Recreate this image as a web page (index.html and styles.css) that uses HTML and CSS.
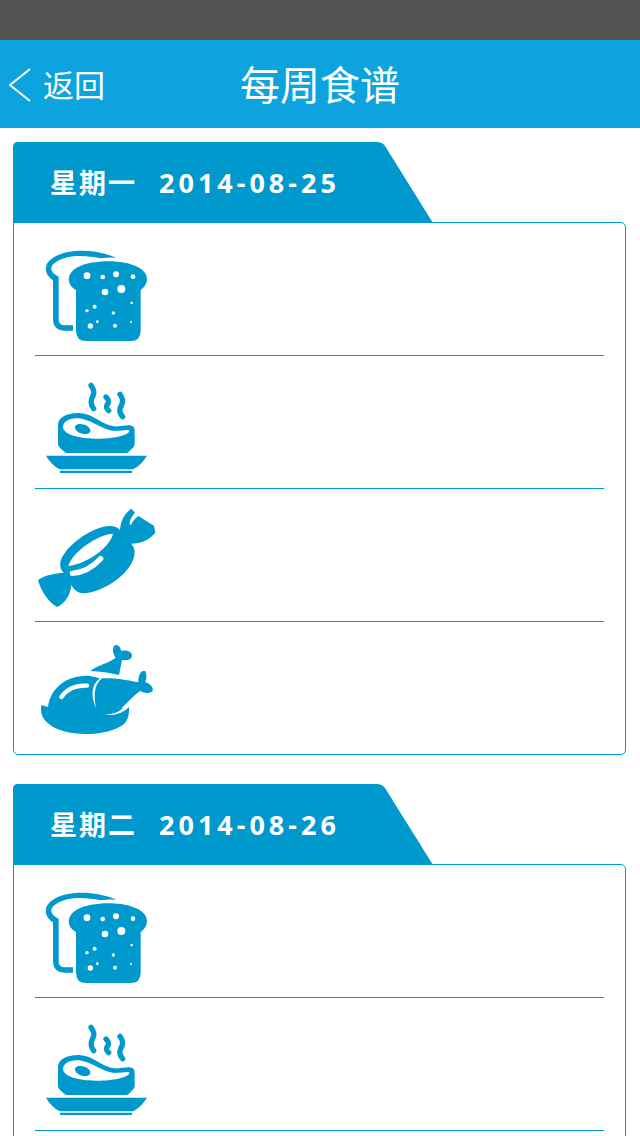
FILE: index.html
```html
<!DOCTYPE html>
<html lang="zh-CN">
<head>
<meta charset="utf-8">
<meta name="viewport" content="width=device-width, initial-scale=1">
<title>每周食谱</title>
<link rel="stylesheet" href="styles.css">
</head>
<body>
<svg class="symbols" aria-hidden="true">
  <symbol id="bread" viewBox="15 -51 375 396">
    <path class="solid" d="M259 53C190 24 108 27 68 54C39 73 42 103 69 121V238Q70 271 102 272H129V256H102Q86 255 86 238V110C59 97 57 79 78 66C112 43 170 46 211 55Q236 51 259 53Z"/>
    <path class="solid" d="M138 150C109 134 109 101 140 83C185 58 280 57 325 82C359 101 358 132 332 150V272Q332 303 301 303H169Q138 303 138 272Z"/>
    <g class="hole">
      <circle cx="171" cy="107" r="10"/><circle cx="218" cy="111" r="7"/><circle cx="258" cy="103" r="9"/><circle cx="309" cy="110" r="7"/>
      <circle cx="274" cy="147" r="12"/><circle cx="225" cy="156" r="10"/><circle cx="305" cy="189" r="4"/><circle cx="194" cy="200" r="6"/>
      <circle cx="171" cy="212" r="5"/><circle cx="250" cy="219" r="5"/><circle cx="181" cy="258" r="8"/><circle cx="202" cy="245" r="4"/>
      <circle cx="255" cy="257" r="6"/><circle cx="303" cy="246" r="3"/>
    </g>
  </symbol>
  <symbol id="steak" viewBox="15 -57 375 396">
    <path class="line round" stroke-width="16" d="M183 31C198 52 190 59 185 72C181 84 184 92 191 101M228 66C240 78 236 83 231 90C227 97 230 101 236 107M270 58C284 78 276 86 271 98C267 109 270 116 278 125"/>
    <path class="solid" d="M84 150C84 124 116 114 148 114C190 116 213 148 252 154C278 156 313 140 314 166V205Q315 213 307 220L296 231Q293 234 289 234H111Q107 234 104 231L90 219Q84 213 84 207Z"/>
    <path class="hole" d="M99 156C100 137 120 130 146 130C180 132 208 160 247 167C269 170 298 160 298 168C295 183 242 191 205 191C144 192 99 177 99 156Z"/>
    <ellipse class="solid" cx="158" cy="162" rx="24" ry="14" transform="rotate(18 158 162)"/>
    <path class="solid" d="M48 242H351C342 257 328 273 310 283H90C71 274 56 256 48 242ZM90 287H306V294H90Z"/>
  </symbol>
  <symbol id="candy" viewBox="15 -33 375 396">
    <path class="solid" d="M101 219C83 199 91 176 105 158C136 117 195 80 238 78Q258 77 270 90C272 67 279 43 304 26L315 38C306 49 298 61 299 75L304 73C308 63 316 55 325 48L372 77L376 98C359 120 330 131 304 131Q314 143 314 158C311 218 219 277 161 280Q138 281 124 255C122 282 105 312 81 321C57 307 35 279 24 240C47 225 76 219 101 219Z"/>
    <path class="hole" d="M115 198C126 157 203 102 249 101C239 143 171 191 115 198Z"/>
    <path class="gap round" stroke-width="16" d="M127 220C161 218 188 202 212 176"/>
  </symbol>
  <symbol id="chicken" viewBox="15 -39 375 396">
    <path class="solid" d="M180 108C209 87 239 84 257 68C248 56 246 37 255 30C266 28 273 39 273 48C288 44 306 50 306 62C305 73 292 77 276 75L267 120C238 113 213 109 180 108Z"/>
    <path class="solid" d="M34 210L54 216C61 162 108 118 181 123L214 130C242 128 282 132 325 142C325 119 333 103 346 109C351 119 350 131 346 141C363 148 371 157 368 168C357 178 342 174 330 168C309 183 293 203 273 221L297 214C298 238 295 254 282 267C237 305 101 310 54 265C35 249 31 231 34 210Z"/>
    <path class="hole" d="M180 121C195 125 202 127 209 131C185 146 181 181 198 219C190 178 193 148 216 130L234 120Z"/>
    <path class="hole" d="M226 237C254 239 276 226 297 203V216C278 234 252 245 226 237Z"/>
    <path class="gap round" stroke-width="13" d="M94 186C111 162 136 150 171 152"/>
  </symbol>
</svg>

<div class="status-bar"></div>
<header class="nav">
  <a class="back" href="#">
    <svg class="chevron" viewBox="0 0 22 34" aria-hidden="true"><path d="M21 1L1 17L21 33"/></svg>
    <span>返回</span>
  </a>
  <h1 class="title">每周食谱</h1>
</header>

<main class="menu">
  <section class="day">
    <h2 class="tab"><span>星期一</span><time datetime="2014-08-25">2014-08-25</time></h2>
    <ul class="meals">
      <li class="meal"><svg class="icon" role="img" aria-label="早餐"><use href="#bread"/></svg></li>
      <li class="meal"><svg class="icon" role="img" aria-label="午餐"><use href="#steak"/></svg></li>
      <li class="meal"><svg class="icon" role="img" aria-label="点心"><use href="#candy"/></svg></li>
      <li class="meal"><svg class="icon" role="img" aria-label="晚餐"><use href="#chicken"/></svg></li>
    </ul>
  </section>
  <section class="day">
    <h2 class="tab"><span>星期二</span><time datetime="2014-08-26">2014-08-26</time></h2>
    <ul class="meals">
      <li class="meal"><svg class="icon" role="img" aria-label="早餐"><use href="#bread"/></svg></li>
      <li class="meal"><svg class="icon" role="img" aria-label="午餐"><use href="#steak"/></svg></li>
      <li class="meal"><svg class="icon" role="img" aria-label="点心"><use href="#candy"/></svg></li>
      <li class="meal"><svg class="icon" role="img" aria-label="晚餐"><use href="#chicken"/></svg></li>
    </ul>
  </section>
</main>
</body>
</html>
```
FILE: styles.css
```css
:root {
  --blue: #0099cd;
  --nav: #0ca3df;
}

* { box-sizing: border-box; }

html { scrollbar-width: none; }

body {
  margin: 0;
  background: #fff;
  font-family: "Noto Sans", "Noto Sans CJK SC", sans-serif;
}

.symbols {
  position: absolute;
  width: 0;
  height: 0;
}

.solid { fill: var(--blue); }
.hole { fill: #fff; }
.line { fill: none; stroke: var(--blue); }
.gap { fill: none; stroke: #fff; }
.round { stroke-linecap: round; }

.status-bar {
  height: 40px;
  background: #535353;
}

.nav {
  display: grid;
  grid-template-columns: 1fr auto 1fr;
  align-items: center;
  height: 88px;
  padding: 2px 9px 0;
  background: var(--nav);
  color: #fff;
}

.back {
  display: flex;
  align-items: center;
  gap: 12px;
  color: #fff;
  font-size: 31px;
  line-height: 40px;
  text-decoration: none;
}

.chevron {
  width: 22px;
  height: 34px;
  fill: none;
  stroke: #fff;
  stroke-width: 2;
}

.title {
  margin: 0;
  font-size: 40px;
  font-weight: 400;
  line-height: 56px;
}

.menu { padding: 14px 14px 29px 13px; }

.day + .day { margin-top: 29px; }

.tab {
  display: flex;
  align-items: center;
  gap: 22px;
  width: 420px;
  height: 81px;
  margin: 0 0 -1px;
  padding-left: 37px;
  background: var(--blue);
  clip-path: path("M0 81V5Q0 0 5 0H364Q369 0 372 4L420 81Z");
  color: #fff;
  font-size: 27px;
  font-weight: 700;
  letter-spacing: 2px;
  line-height: 40px;
}

.tab time { letter-spacing: 4px; }

.meals {
  margin: 0;
  padding: 0 21px;
  border: 1px solid var(--blue);
  border-radius: 0 5px 5px 5px;
  list-style: none;
}

.meal { border-bottom: 1px solid var(--blue); }
.meal:last-child { border-bottom: 0; }

.icon {
  display: block;
  width: 125px;
  height: 132px;
}
```
